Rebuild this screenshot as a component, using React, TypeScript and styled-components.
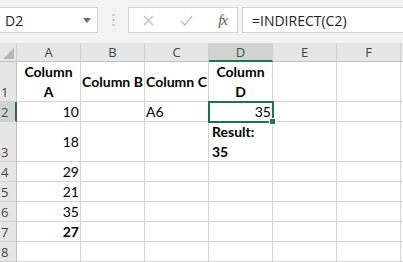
import { Fragment } from "react";
import styled, { createGlobalStyle } from "styled-components";

const GlobalStyle = createGlobalStyle`
	html, body {
		margin: 0;
		padding: 0;
		background: #ffffff;
	}
`;

const Page = styled.div`
	width: 403px;
	height: 262px;
	overflow: hidden;
	background: #ffffff;
	font-family: Lato, "Liberation Sans", sans-serif;
`;

const Toolbar = styled.div`
	height: 43px;
	box-sizing: border-box;
	padding-top: 7px;
	background: #f3f3f3;
	display: flex;
	align-items: flex-start;
`;

const NameBox = styled.div`
	width: 99px;
	height: 26px;
	box-sizing: border-box;
	margin-left: -1px;
	background: #ffffff;
	border: 1px solid #d4d4d4;
	display: flex;
	align-items: center;
	justify-content: space-between;
	padding: 0 6px 0 5px;
	font-family: "Open Sans", "Noto Sans", sans-serif;
	font-size: 14px;
	color: #222;
`;

const Separator = styled.div`
	width: 30px;
	height: 26px;
	display: flex;
	align-items: center;
	justify-content: center;
`;

const FormulaButtons = styled.div`
	width: 110px;
	height: 26px;
	box-sizing: border-box;
	background: #ffffff;
	border: 1px solid #d4d4d4;
	display: flex;
	align-items: center;
	justify-content: space-between;
	padding: 0 10px 0 14px;
`;

const FxLabel = styled.span`
	font-family: "Liberation Serif", serif;
	font-style: italic;
	font-size: 15px;
	color: #555;
	letter-spacing: -1px;
`;

const FormulaInput = styled.div`
	flex: 1;
	height: 26px;
	box-sizing: border-box;
	margin-left: 4px;
	margin-right: -2px;
	background: #ffffff;
	border: 1px solid #d4d4d4;
	display: flex;
	align-items: center;
	padding-left: 9px;
	font-family: "Open Sans", "Noto Sans", sans-serif;
	font-size: 14px;
	color: #222;
`;

const Grid = styled.div`
	display: grid;
	grid-template-columns: 17px repeat(6, 64px) 1fr;
	grid-template-rows: 19px 40px 20px 40px 20px 20px 20px 20px 20px;
`;

const Corner = styled.div`
	position: relative;
	background: #e6e6e6;
	border-right: 1px solid #d0d0d0;
	border-bottom: 1px solid #c0c0c0;
	box-sizing: border-box;
`;

const CornerTriangle = styled.div`
	position: absolute;
	right: 2px;
	bottom: 2px;
	width: 0;
	height: 0;
	border-left: 11px solid transparent;
	border-bottom: 11px solid #b8b8b8;
`;

const ColHeader = styled.div<{ $active?: boolean }>`
	box-sizing: border-box;
	background: ${({ $active }) => ($active ? "#d2d2d2" : "#e6e6e6")};
	border-right: 1px solid #d0d0d0;
	border-bottom: ${({ $active }) =>
		$active ? "2px solid #217346" : "1px solid #c0c0c0"};
	display: flex;
	align-items: center;
	justify-content: center;
	font-family: "Open Sans", "Noto Sans", sans-serif;
	font-size: 13px;
	color: ${({ $active }) => ($active ? "#2a5e3e" : "#444")};
`;

const RowHeader = styled.div<{ $active?: boolean }>`
	box-sizing: border-box;
	background: ${({ $active }) => ($active ? "#d2d2d2" : "#e6e6e6")};
	border-right: ${({ $active }) =>
		$active ? "2px solid #217346" : "1px solid #c0c0c0"};
	border-bottom: 1px solid #d0d0d0;
	display: flex;
	align-items: flex-end;
	padding-left: 1px;
	font-family: "Open Sans", "Noto Sans", sans-serif;
	font-size: 13px;
	line-height: 18px;
	color: ${({ $active }) => ($active ? "#2a5e3e" : "#444")};
`;

const Cell = styled.div<{
	$align?: "left" | "right" | "center";
	$bold?: boolean;
	$selected?: boolean;
	$wrap?: boolean;
}>`
	position: relative;
	box-sizing: border-box;
	border-right: 1px solid #d4d4d4;
	border-bottom: 1px solid #d4d4d4;
	display: flex;
	flex-direction: column;
	justify-content: center;
	align-items: ${({ $align }) =>
		$align === "right" ? "flex-end" : $align === "center" ? "center" : "flex-start"};
	text-align: ${({ $align }) => $align ?? "left"};
	padding: 0 ${({ $wrap }) => ($wrap ? "3px" : "1px")};
	white-space: ${({ $wrap }) => ($wrap ? "normal" : "nowrap")};
	font-size: 14px;
	line-height: 20px;
	font-weight: ${({ $bold }) => ($bold ? 700 : 400)};
	color: #000;
	${({ $selected }) =>
		$selected &&
		`
		outline: 2px solid #217346;
		outline-offset: -1px;
		z-index: 1;
	`}
`;

const FillHandle = styled.span`
	position: absolute;
	right: -4px;
	bottom: -4px;
	width: 5px;
	height: 5px;
	background: #217346;
	border: 1px solid #ffffff;
	z-index: 2;
`;

type Align = "left" | "right" | "center";

interface CellData {
	text?: string;
	align?: Align;
	bold?: boolean;
	selected?: boolean;
	wrap?: boolean;
}

const columns = ["A", "B", "C", "D", "E", "F"];

const rows: CellData[][] = [
	[
		{ text: "Column A", align: "center", bold: true, wrap: true },
		{ text: "Column B", align: "center", bold: true },
		{ text: "Column C", align: "center", bold: true },
		{ text: "Column D", align: "center", bold: true, wrap: true },
		{},
		{},
	],
	[
		{ text: "10", align: "right" },
		{},
		{ text: "A6" },
		{ text: "35", align: "right", selected: true },
		{},
		{},
	],
	[
		{ text: "18", align: "right" },
		{},
		{},
		{ text: "Result: 35", bold: true, wrap: true },
		{},
		{},
	],
	[{ text: "29", align: "right" }, {}, {}, {}, {}, {}],
	[{ text: "21", align: "right" }, {}, {}, {}, {}, {}],
	[{ text: "35", align: "right" }, {}, {}, {}, {}, {}],
	[{ text: "27", align: "right", bold: true }, {}, {}, {}, {}, {}],
	[{}, {}, {}, {}, {}, {}],
];

function App() {
	return (
		<Page>
			<GlobalStyle />
			<Toolbar>
				<NameBox>
					<span>D2</span>
					<svg width="8" height="5" viewBox="0 0 8 5">
						<path d="M0 0 H8 L4 5 Z" fill="#6b6b6b" />
					</svg>
				</NameBox>
				<Separator>
					<svg width="3" height="14" viewBox="0 0 3 14">
						<rect x="0.5" y="1" width="2" height="2" fill="#c4c4c4" />
						<rect x="0.5" y="6" width="2" height="2" fill="#c4c4c4" />
						<rect x="0.5" y="11" width="2" height="2" fill="#c4c4c4" />
					</svg>
				</Separator>
				<FormulaButtons>
					<svg width="11" height="11" viewBox="0 0 11 11">
						<path d="M1 1 L10 10 M10 1 L1 10" stroke="#bdbdbd" strokeWidth="1.3" fill="none" />
					</svg>
					<svg width="13" height="11" viewBox="0 0 13 11">
						<path d="M1 6 L5 10 L12 1" stroke="#bdbdbd" strokeWidth="1.4" fill="none" />
					</svg>
					<FxLabel>fx</FxLabel>
				</FormulaButtons>
				<FormulaInput>=INDIRECT(C2)</FormulaInput>
			</Toolbar>
			<Grid>
				<Corner>
					<CornerTriangle />
				</Corner>
				{columns.map((col) => (
					<ColHeader key={col} $active={col === "D"}>
						{col}
					</ColHeader>
				))}
				<ColHeader />
				{rows.map((row, r) => (
					<Fragment key={r}>
						<RowHeader $active={r === 1}>{r + 1}</RowHeader>
						{row.map((cell, c) => (
							<Cell
								key={c}
								$align={cell.align}
								$bold={cell.bold}
								$selected={cell.selected}
								$wrap={cell.wrap}
							>
								{cell.text}
								{cell.selected && <FillHandle />}
							</Cell>
						))}
						<Cell />
					</Fragment>
				))}
			</Grid>
		</Page>
	);
}

export default App;
